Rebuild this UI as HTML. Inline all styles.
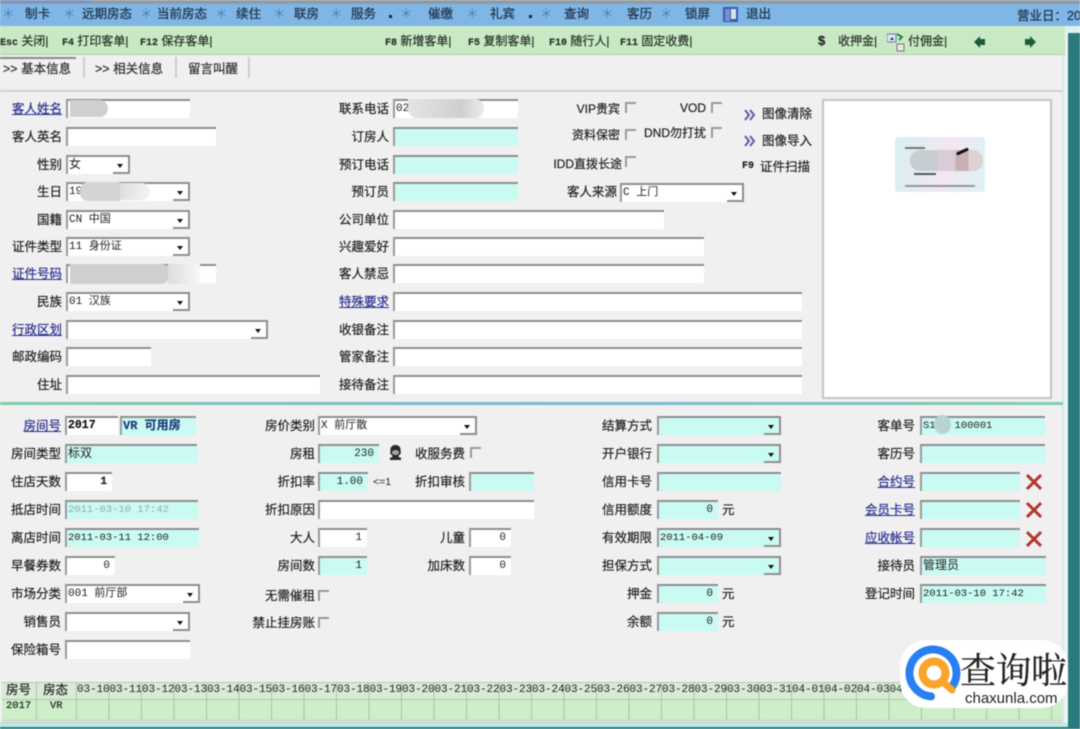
<!DOCTYPE html>
<html><head><meta charset="utf-8"><style>
html,body{margin:0;padding:0;width:1080px;height:729px;overflow:hidden;background:#f0f0f0}
#w{position:absolute;left:0;top:0;width:1080px;height:729px;overflow:hidden;background:#f0f0f0;filter:blur(.45px);font-family:"Liberation Sans","Noto Sans CJK SC",sans-serif;font-size:12.5px;color:#222;-webkit-text-stroke:.2px #222}
#w div,#w span.p{position:absolute}
.t{white-space:nowrap;line-height:20px}
.l{white-space:nowrap;text-align:right;height:19px;line-height:21px}
.a{left:0;width:62px}.b{left:330px;width:59px}.e{left:0;width:61px}.f{left:220px;width:95px}.g{left:400px;width:65px}.h{left:580px;width:72px}.k{left:840px;width:75px}
.u{color:#2b2f8f;-webkit-text-stroke:.2px #2b2f8f;text-decoration:underline}
.i{box-sizing:border-box;height:19px;background:#fff;border-top:2px solid #8f8f8f;border-left:2px solid #9a9a9a;font-family:"Liberation Mono","Noto Sans CJK SC",monospace;font-size:11px;line-height:16px;padding-left:1px;white-space:nowrap;overflow:hidden;-webkit-text-stroke:0}
.c{background:#c9fbf3}
.r{text-align:right;padding-right:5px}
.s{border-right:2px solid #8f8f8f}
.s i{position:absolute;right:0;bottom:0;width:15px;height:16px;border-bottom:2px solid #8f8f8f;box-sizing:border-box}
.s i:after{content:"";position:absolute;left:4px;top:6px;border:3.5px solid transparent;border-top:4px solid #111;border-bottom:0}
.x{box-sizing:border-box;width:11px;height:11px;border-top:2px solid #999;border-left:2px solid #999}
.m{top:3px;height:22px;line-height:22px;white-space:nowrap;color:#24384f;font-size:12.5px;-webkit-text-stroke:.3px #24384f}
.st{color:#4f7fb0;-webkit-text-stroke:0}
.tb{top:30px;line-height:22px;white-space:nowrap;font-size:12px;color:#2c3b2c}
.tb b{font:700 10px "Liberation Mono",monospace}
.tab{top:60px;line-height:18px;font-size:12.5px;white-space:nowrap;color:#333}
.sep{width:2px;background:#ccc}
.b2{font-weight:700;-webkit-text-stroke:.2px}
.dd span{display:inline-block;width:32.5px;text-align:left}
</style></head><body>
<div id="w">
<!-- top -->
<div style="left:0;top:0;width:1080px;height:4px;background:#8f9ca6"></div>
<div style="left:0;top:0;width:92px;height:3px;background:#7d93c0"></div>
<div style="left:0;top:4px;width:1080px;height:22px;background:#7fb6e6"></div>
<div class="m st" style="left:2px">＊</div><div class="m" style="left:25px">制卡</div>
<div class="m st" style="left:63px">＊</div><div class="m" style="left:82px">远期房态</div>
<div class="m st" style="left:140px">＊</div><div class="m" style="left:157px">当前房态</div>
<div class="m st" style="left:215px">＊</div><div class="m" style="left:236px">续住</div>
<div class="m st" style="left:273px">＊</div><div class="m" style="left:294px">联房</div>
<div class="m st" style="left:330px">＊</div><div class="m" style="left:351px">服务</div>
<div style="left:389px;top:15px;width:3px;height:3px;background:#223"></div>
<div class="m st" style="left:400px">＊</div><div class="m" style="left:428px">催缴</div>
<div class="m st" style="left:466px">＊</div><div class="m" style="left:490px">礼宾</div>
<div style="left:529px;top:15px;width:3px;height:3px;background:#223"></div>
<div class="m st" style="left:540px">＊</div><div class="m" style="left:564px">查询</div>
<div class="m st" style="left:601px">＊</div><div class="m" style="left:627px">客历</div>
<div class="m st" style="left:660px">＊</div><div class="m" style="left:685px">锁屏</div>
<svg style="position:absolute;left:723px;top:7px" width="15" height="16"><rect x="0" y="0" width="15" height="15" fill="#3b5fa8"/><rect x="8" y="2" width="5" height="10" fill="#d8e6f0"/><rect x="2" y="2" width="5" height="12" fill="#7a8fd0"/></svg>
<div class="m" style="left:746px">退出</div>
<div class="m" style="left:1017px;top:5px">营业日：20</div>
<!-- toolbar -->
<div style="left:0;top:26px;width:1065px;height:29px;background:#c9e9c5;border-bottom:1px solid #b9c7b6;box-sizing:border-box"></div>
<div class="tb" style="left:0"><b>Esc</b> 关闭|</div>
<div class="tb" style="left:62px"><b>F4</b> 打印客单|</div>
<div class="tb" style="left:140px"><b>F12</b> 保存客单|</div>
<div class="tb" style="left:385px"><b>F8</b> 新增客单|</div>
<div class="tb" style="left:468px"><b>F5</b> 复制客单|</div>
<div class="tb" style="left:549px"><b>F10</b> 随行人|</div>
<div class="tb" style="left:620px"><b>F11</b> 固定收费|</div>
<div class="tb" style="left:818px;font-size:13px;font-weight:700;color:#222">$</div>
<div class="tb" style="left:838px">收押金|</div>
<svg style="position:absolute;left:887px;top:33px" width="18" height="19"><rect x="0" y="1" width="9" height="8" fill="#dfe8f0" stroke="#67a"/><path d="M3 7l2-3 2 3z" fill="#236"/><path d="M10 1l5 3-3 3" fill="none" stroke="#2a8a3a" stroke-width="2"/><rect x="10" y="11" width="7" height="7" fill="#e8e8e8" stroke="#777"/></svg>
<div class="tb" style="left:908px">付佣金|</div>
<svg style="position:absolute;left:974px;top:36px" width="12" height="12"><path d="M0 6L6 0V3H11V9H6V12Z" fill="#1d5c3a"/></svg>
<svg style="position:absolute;left:1024px;top:36px" width="12" height="12"><path d="M12 6L6 0V3H1V9H6V12Z" fill="#1d5c3a"/></svg>
<!-- tabs -->
<div style="left:0;top:57px;width:76px;height:2px;background:#8a8a8a"></div>
<div class="tab" style="left:3px">&gt;&gt; 基本信息</div>
<div class="sep" style="left:83px;top:57px;height:21px"></div>
<div class="tab" style="left:95px">&gt;&gt; 相关信息</div>
<div class="sep" style="left:175px;top:57px;height:21px"></div>
<div class="tab" style="left:188px">留言叫醒</div>
<div class="sep" style="left:248px;top:57px;height:21px"></div>
<div style="left:0;top:90px;width:1063px;height:2px;background:#d2d2d2"></div>
<!-- right chrome -->
<div style="left:1062px;top:55px;width:2px;height:668px;background:#dfe6e6"></div>
<div style="left:1064px;top:55px;width:4px;height:668px;background:#e9f7f4"></div>
<div style="left:1065px;top:26px;width:15px;height:7px;background:#dff2f2"></div>
<div style="left:1068px;top:33px;width:12px;height:696px;background:#2a7a7e"></div>
<div style="left:0;top:722px;width:1062px;height:1px;background:#c4c4c4"></div>
<div style="left:0;top:723px;width:1068px;height:4px;background:#b6eee4"></div>
<div style="left:0;top:727px;width:1080px;height:2px;background:#2a7a7e"></div>
<!-- column 1 -->
<div class="l a u" style="top:99px">客人姓名</div><div class="i" style="left:66px;top:99px;width:124px"></div>
<div class="l a" style="top:127px">客人英名</div><div class="i" style="left:66px;top:127px;width:150px"></div>
<div class="l a" style="top:155px">性别</div><div class="i s" style="left:66px;top:155px;width:64px;font-size:12px">女<i></i></div>
<div class="l a" style="top:182px">生日</div><div class="i s" style="left:66px;top:182px;width:124px">19<i></i></div>
<div class="l a" style="top:210px">国籍</div><div class="i s" style="left:66px;top:210px;width:124px">CN 中国<i></i></div>
<div class="l a" style="top:237px">证件类型</div><div class="i s" style="left:66px;top:237px;width:124px">11 身份证<i></i></div>
<div class="l a u" style="top:264px">证件号码</div><div class="i" style="left:66px;top:264px;width:150px"></div>
<div class="l a" style="top:292px">民族</div><div class="i s" style="left:66px;top:292px;width:124px">01 汉族<i></i></div>
<div class="l a u" style="top:320px">行政区划</div><div class="i s" style="left:66px;top:320px;width:202px"><i></i></div>
<div class="l a" style="top:347px">邮政编码</div><div class="i" style="left:66px;top:347px;width:85px"></div>
<div class="l a" style="top:375px">住址</div><div class="i" style="left:66px;top:375px;width:254px"></div>
<!-- blurs -->
<div style="left:70px;top:100px;width:38px;height:17px;background:#cfcfcf;border-radius:0 9px 9px 0"></div>
<div style="left:80px;top:182px;width:45px;height:19px;background:#d4d4d4;border-radius:8px"></div>
<div style="left:120px;top:183px;width:30px;height:17px;background:linear-gradient(90deg,#dedede,#f4f4f4);border-radius:0 9px 9px 0"></div>
<div style="left:70px;top:264px;width:100px;height:20px;background:#cfcfcf;border-radius:0 9px 9px 0"></div>
<div style="left:168px;top:264px;width:32px;height:20px;background:linear-gradient(90deg,#dcdcdc,#f8f8f8)"></div>
<!-- column 2 -->
<div class="l b" style="top:99px">联系电话</div><div class="i" style="left:393px;top:99px;width:125px">02</div>
<div style="left:408px;top:99px;width:76px;height:19px;background:linear-gradient(90deg,#e4e4e4,#cfcfcf 70%,#ececec);border-radius:0 9px 9px 9px"></div>
<div class="l b" style="top:127px">订房人</div><div class="i c" style="left:393px;top:127px;width:125px"></div>
<div class="l b" style="top:155px">预订电话</div><div class="i c" style="left:393px;top:155px;width:125px"></div>
<div class="l b" style="top:182px">预订员</div><div class="i c" style="left:393px;top:182px;width:125px"></div>
<div class="l b" style="top:210px">公司单位</div><div class="i" style="left:393px;top:210px;width:271px"></div>
<div class="l b" style="top:237px">兴趣爱好</div><div class="i" style="left:393px;top:237px;width:311px"></div>
<div class="l b" style="top:264px">客人禁忌</div><div class="i" style="left:393px;top:264px;width:311px"></div>
<div class="l b u" style="top:292px">特殊要求</div><div class="i" style="left:393px;top:292px;width:409px"></div>
<div class="l b" style="top:320px">收银备注</div><div class="i" style="left:393px;top:320px;width:409px"></div>
<div class="l b" style="top:347px">管家备注</div><div class="i" style="left:393px;top:347px;width:409px"></div>
<div class="l b" style="top:375px">接待备注</div><div class="i" style="left:393px;top:375px;width:409px"></div>
<!-- checks -->
<div class="l" style="left:540px;width:80px;top:99px;font-size:12px">VIP贵宾</div><div class="x" style="left:625px;top:102px"></div>
<div class="l" style="left:660px;width:46px;top:98px;font-size:12px">VOD</div><div class="x" style="left:711px;top:102px"></div>
<div class="l" style="left:540px;width:80px;top:125px;font-size:12px">资料保密</div><div class="x" style="left:625px;top:129px"></div>
<div class="l" style="left:640px;width:66px;top:123px;font-size:12px">DND勿打扰</div><div class="x" style="left:711px;top:127px"></div>
<div class="l" style="left:540px;width:82px;top:154px;font-size:12px">IDD直拨长途</div><div class="x" style="left:625px;top:156px"></div>
<div class="l" style="left:540px;width:77px;top:182px">客人来源</div><div class="i s" style="left:620px;top:183px;width:124px">C 上门<i></i></div>
<svg style="position:absolute;left:744px;top:109px" width="11" height="38" fill="none" stroke="#5a5fae" stroke-width="2"><path d="M1 1L5 6 1 11M6 1L10 6 6 11"/><path d="M1 27L5 32 1 37M6 27L10 32 6 37"/></svg>
<div class="t" style="left:762px;top:104px">图像清除</div>
<div class="t" style="left:762px;top:131px">图像导入</div>
<div class="t" style="left:742px;top:157px;font:700 10px/20px 'Liberation Mono',monospace">F9</div>
<div class="t" style="left:760px;top:157px">证件扫描</div>
<!-- photo -->
<div style="left:822px;top:99px;width:230px;height:300px;box-sizing:border-box;background:#fff;border:2px solid #c4c4c4"></div>
<div style="left:895px;top:137px;width:90px;height:55px;background:linear-gradient(100deg,#d8f0f4,#f4e6f0 55%,#dcf2f6);border-radius:3px"></div>
<div style="left:910px;top:150px;width:73px;height:21px;background:linear-gradient(90deg,#c6ced2 0 38%,#d8ccd6 38% 62%,#c8b0b2 62% 80%,#ddd2d2 80%);border-radius:10px"></div>
<div style="left:956px;top:150px;width:13px;height:3px;background:#111;border-radius:4px;transform:rotate(-25deg)"></div>
<div style="left:905px;top:147px;width:20px;height:2px;background:#777"></div>
<div style="left:914px;top:173px;width:22px;height:2px;background:#556"></div>
<div style="left:905px;top:185px;width:70px;height:2px;background:#8a9aa0"></div>
<!-- divider -->
<div style="left:0;top:402px;width:1063px;height:3px;background:linear-gradient(90deg,#7fd0a8,#7fb6d8 50%,#7fd0b0)"></div>
<!-- lower col 1 -->
<div class="l e u" style="top:416px">房间号</div><div class="i b2" style="left:65px;top:416px;width:53px;font-size:11.5px;color:#111">2017</div>
<div class="i c b2" style="left:120px;top:416px;width:76px;color:#1d3c78;font-size:12px">VR 可用房</div>
<div class="l e" style="top:444px">房间类型</div><div class="i c" style="left:65px;top:444px;width:132px;font-size:12px">标双</div>
<div class="l e" style="top:472px">住店天数</div><div class="i r b2" style="left:65px;top:472px;width:47px">1</div>
<div class="l e" style="top:500px">抵店时间</div><div class="i c" style="left:65px;top:500px;width:133px;color:#9aa8a8;font-size:10.5px">2011-03-10 17:42</div>
<div class="l e" style="top:528px">离店时间</div><div class="i c" style="left:65px;top:528px;width:134px;font-size:10.5px">2011-03-11 12:00</div>
<div class="l e" style="top:556px">早餐券数</div><div class="i r" style="left:65px;top:556px;width:50px">0</div>
<div class="l e" style="top:584px">市场分类</div><div class="i s" style="left:65px;top:584px;width:135px">001 前厅部<i></i></div>
<div class="l e" style="top:612px">销售员</div><div class="i s" style="left:65px;top:612px;width:125px"><i></i></div>
<div class="l e" style="top:640px">保险箱号</div><div class="i" style="left:65px;top:640px;width:125px"></div>
<!-- lower col 2 -->
<div class="l f" style="top:416px">房价类别</div><div class="i s" style="left:318px;top:416px;width:159px">X 前厅散<i></i></div>
<div class="l f" style="top:444px">房租</div><div class="i c r" style="left:318px;top:444px;width:61px">230</div>
<svg style="position:absolute;left:388px;top:445px" width="15" height="16"><path d="M7.500 0C3.500 0 2 3 2.500 6 1.500 8 3 10 4.500 10.500L4 12.500H2V15H13V12.500H11L10.500 10.500C12 10 13.500 8 12.500 6 13 3 11.500 0 7.500 0Z" fill="#2a2a2a"/><ellipse cx="7.500" cy="7.500" rx="3.500" ry="2.500" fill="#a8a8a8"/></svg>
<div class="l g" style="top:444px">收服务费</div><div class="x" style="left:470px;top:447px"></div>
<div class="l f" style="top:472px">折扣率</div><div class="i c r" style="left:318px;top:472px;width:50px">1.00</div>
<div class="t" style="left:373px;top:473px;font-size:10.500px;line-height:19px;-webkit-text-stroke:0">&lt;=1</div>
<div class="l g" style="top:472px">折扣审核</div><div class="i c" style="left:469px;top:472px;width:65px"></div>
<div class="l f" style="top:500px">折扣原因</div><div class="i" style="left:318px;top:500px;width:216px"></div>
<div class="l f" style="top:528px">大人</div><div class="i r" style="left:318px;top:528px;width:49px">1</div>
<div class="l g" style="top:528px">儿童</div><div class="i r" style="left:469px;top:528px;width:42px">0</div>
<div class="l f" style="top:556px">房间数</div><div class="i c r" style="left:318px;top:556px;width:49px">1</div>
<div class="l g" style="top:556px">加床数</div><div class="i r" style="left:469px;top:556px;width:42px">0</div>
<div class="l f" style="top:586px">无需催租</div><div class="x" style="left:318px;top:590px"></div>
<div class="l f" style="top:613px">禁止挂房账</div><div class="x" style="left:318px;top:617px"></div>
<!-- lower col 3 -->
<div class="l h" style="top:416px">结算方式</div><div class="i c s" style="left:657px;top:416px;width:124px"><i></i></div>
<div class="l h" style="top:444px">开户银行</div><div class="i c s" style="left:657px;top:444px;width:124px"><i></i></div>
<div class="l h" style="top:472px">信用卡号</div><div class="i c" style="left:657px;top:472px;width:124px"></div>
<div class="l h" style="top:500px">信用额度</div><div class="i c r" style="left:657px;top:500px;width:61px">0</div><div class="t" style="left:722px;top:500px;line-height:21px">元</div>
<div class="l h" style="top:528px">有效期限</div><div class="i c s" style="left:657px;top:528px;width:124px;font-size:10.500px">2011-04-09<i></i></div>
<div class="l h" style="top:556px">担保方式</div><div class="i c s" style="left:657px;top:556px;width:124px"><i></i></div>
<div class="l h" style="top:584px">押金</div><div class="i c r" style="left:657px;top:584px;width:61px">0</div><div class="t" style="left:722px;top:584px;line-height:21px">元</div>
<div class="l h" style="top:612px">余额</div><div class="i c r" style="left:657px;top:612px;width:61px">0</div><div class="t" style="left:722px;top:612px;line-height:21px">元</div>
<!-- lower col 4 -->
<div class="l k" style="top:416px">客单号</div><div class="i c" style="left:920px;top:416px;width:125px;font-size:10.500px">S1&nbsp;&nbsp;&nbsp;100001</div>
<div style="left:934px;top:415px;width:17px;height:19px;border-radius:50%;background:#b9d3d2"></div>
<div class="l k" style="top:444px">客历号</div><div class="i c" style="left:920px;top:444px;width:125px"></div>
<div class="l k u" style="top:472px">合约号</div><div class="i c" style="left:920px;top:472px;width:100px"></div>
<div class="l k u" style="top:500px">会员卡号</div><div class="i c" style="left:920px;top:500px;width:100px"></div>
<div class="l k u" style="top:528px">应收帐号</div><div class="i c" style="left:920px;top:528px;width:100px"></div>
<svg style="position:absolute;left:1026px;top:474px" width="16" height="74"><g stroke="#b2362e" stroke-width="3" fill="none"><path d="M1 1L15 15M15 1L1 15"/><path d="M1 29L15 43M15 29L1 43"/><path d="M1 58L15 72M15 58L1 72"/></g></svg>
<div class="l k" style="top:556px">接待员</div><div class="i c" style="left:920px;top:556px;width:126px;font-size:12px">管理员</div>
<div class="l k" style="top:584px">登记时间</div><div class="i c" style="left:920px;top:584px;width:126px;font-size:10.500px">2011-03-10 17:42</div>
<!-- grid -->
<div style="left:2px;top:682px;width:1060px;height:39px;background:#cdeec9;border-bottom:1px solid #c4c4c4;box-sizing:border-box"></div>
<div style="left:2px;top:682px;width:1060px;height:18px;background:#d8ecd5;border-top:1px solid #b8c8b8;border-bottom:1px solid #aac8aa;box-sizing:border-box"></div>
<div style="left:36px;top:682px;width:1px;height:38px;background:#a9c4a9"></div>
<div style="left:76px;top:682px;width:986px;height:38px;background:repeating-linear-gradient(90deg,#a9c4a9 0 1px,transparent 1px 32.5px)"></div>
<div class="t" style="left:6px;top:680px">房号</div>
<div class="t" style="left:43px;top:680px">房态</div>
<div class="t" style="left:6px;top:697px;font:10.500px/18px 'Liberation Mono',monospace">2017</div>
<div class="t" style="left:50px;top:697px;font:10.500px/18px 'Liberation Mono',monospace">VR</div>
<div class="t dd" style="left:77px;top:680px;width:830px;overflow:hidden;font:11px/20px 'Liberation Mono',monospace;letter-spacing:-.1px;-webkit-text-stroke:0"><span>03-10</span><span>03-11</span><span>03-12</span><span>03-13</span><span>03-14</span><span>03-15</span><span>03-16</span><span>03-17</span><span>03-18</span><span>03-19</span><span>03-20</span><span>03-21</span><span>03-22</span><span>03-23</span><span>03-24</span><span>03-25</span><span>03-26</span><span>03-27</span><span>03-28</span><span>03-29</span><span>03-30</span><span>03-31</span><span>04-01</span><span>04-02</span><span>04-03</span><span>04-04</span></div>
<!-- logo -->
<div style="left:900px;top:640px;width:168px;height:68px;background:#fff;border-radius:26px"></div>
<svg style="position:absolute;left:900px;top:640px" width="66" height="68"><path d="M52.200 46.500A23.500 23.500 0 1 0 31 56.400" fill="none" stroke="#2a7ff0" stroke-width="8" stroke-linecap="round"/><circle cx="34" cy="33" r="11.500" fill="none" stroke="#f9a42a" stroke-width="8"/><path d="M42 41L52 50" stroke="#f9a42a" stroke-width="7" stroke-linecap="round"/></svg>
<div class="t" style="left:960px;top:647px;font:36px/44px 'Noto Serif CJK SC','Liberation Serif',serif;color:#222;letter-spacing:-.5px">查询啦</div>
<div class="t" style="left:965px;top:690px;font:15px/18px 'Liberation Sans',sans-serif;color:#222;-webkit-text-stroke:0">chaxunla.com</div>
</div>
</body></html>
